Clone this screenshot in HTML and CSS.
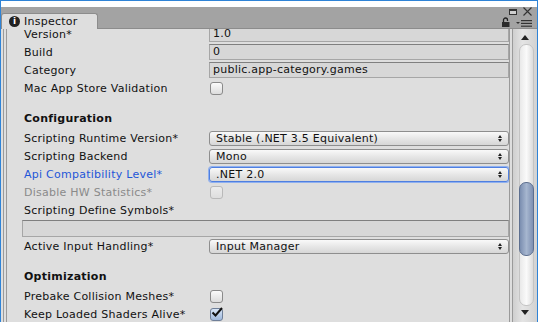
FILE: index.html
```html
<!DOCTYPE html>
<html lang="en">
<head>
    <meta charset="UTF-8">
    <title>Inspector</title>
    <link rel="stylesheet" href="styles.css">
</head>
<body>
    <div class="window">
        <div class="title-strip"></div>
        <div class="tab-bar">
            <div class="tab">
                <span class="info-icon">i</span>
                <span class="tab-title">Inspector</span>
            </div>
            <div class="window-tools">
                <div class="tools-top">
                    <span class="max-icon"></span>
                    <svg class="close-icon" width="9" height="9" viewBox="0 0 9 9"><path d="M0.5 0.5 L8.5 8.5 M8.5 0.5 L0.5 8.5" stroke="#333" stroke-width="1.1"/></svg>
                </div>
                <div class="tools-bottom">
                    <svg class="lock-icon" width="9" height="10" viewBox="0 0 9 10"><path d="M1.5 5 V3 A2 2 0 0 1 5.5 3 V4" fill="none" stroke="#222" stroke-width="1.3"/><rect x="0" y="5" width="7.5" height="5" fill="#2a2a2a"/></svg>
                    <svg class="menu-icon" width="16" height="7" viewBox="0 0 16 7"><path d="M0 2 L4 2 L2 4 Z" fill="#333"/><rect x="5" y="0" width="11" height="1.2" fill="#333"/><rect x="5" y="2.8" width="11" height="1.2" fill="#333"/><rect x="5" y="5.6" width="11" height="1.2" fill="#333"/></svg>
                </div>
            </div>
        </div>
        <div class="panel">
            <div class="gutter"></div>
            <div class="content">
                <div class="rows">
                    <div class="row">
                        <span class="label">Version*</span>
                        <span class="text-field">1.0</span>
                    </div>
                    <div class="row">
                        <span class="label">Build</span>
                        <span class="text-field">0</span>
                    </div>
                    <div class="row">
                        <span class="label">Category</span>
                        <span class="text-field">public.app-category.games</span>
                    </div>
                    <div class="row">
                        <span class="label">Mac App Store Validation</span>
                        <span><span class="checkbox"></span></span>
                    </div>

                    <div class="section-title">Configuration</div>
                    <div class="row">
                        <span class="label">Scripting Runtime Version*</span>
                        <span class="popup">Stable (.NET 3.5 Equivalent)<span class="arrows"></span></span>
                    </div>
                    <div class="row">
                        <span class="label">Scripting Backend</span>
                        <span class="popup">Mono<span class="arrows"></span></span>
                    </div>
                    <div class="row">
                        <span class="label label-active">Api Compatibility Level*</span>
                        <span class="popup popup-focus">.NET 2.0<span class="arrows"></span></span>
                    </div>
                    <div class="row">
                        <span class="label label-disabled">Disable HW Statistics*</span>
                        <span><span class="checkbox checkbox-disabled"></span></span>
                    </div>
                    <div class="row">
                        <span class="label">Scripting Define Symbols*</span>
                    </div>
                    <div class="wide-row">
                        <span class="text-field wide-field"></span>
                    </div>
                    <div class="row">
                        <span class="label">Active Input Handling*</span>
                        <span class="popup">Input Manager<span class="arrows"></span></span>
                    </div>

                    <div class="section-title">Optimization</div>
                    <div class="row">
                        <span class="label">Prebake Collision Meshes*</span>
                        <span><span class="checkbox"></span></span>
                    </div>
                    <div class="row">
                        <span class="label">Keep Loaded Shaders Alive*</span>
                        <span><span class="checkbox checkbox-on">
                            <svg width="12" height="11" viewBox="0 0 12 11"><path d="M1.5 5.5 L4.5 8.5 L11 1" fill="none" stroke="#111" stroke-width="2"/></svg>
                        </span></span>
                    </div>
                </div>
            </div>
            <div class="scrollbar">
                <div class="scroll-up"></div>
                <div class="track">
                    <div class="thumb"></div>
                </div>
                <div class="scroll-down"></div>
            </div>
        </div>
    </div>
</body>
</html>
```

FILE: styles.css
```css
body {
    margin: 0;
    font-family: "DejaVu Sans", Verdana, sans-serif;
    font-size: 11px;
    letter-spacing: 0.25px;
    color: #111;
    background: #ffffff;
}

.window {
    width: 538px;
    height: 322px;
    box-sizing: border-box;
    border: 1px solid #2f83d6;
    border-bottom: none;
    overflow: hidden;
    display: flex;
    flex-direction: column;
}

.title-strip {
    height: 6px;
    background: #ffffff;
}

.tab-bar {
    height: 21px;
    background: #a3a3a3;
    display: flex;
    justify-content: space-between;
    align-items: flex-end;
    border-bottom: 1px solid #8c8c8c;
}

.tab {
    width: 88px;
    height: 15px;
    margin-bottom: -1px;
    background: #dedede;
    border: 1px solid #8c8c8c;
    border-bottom: none;
    border-radius: 3px 3px 0 0;
    display: flex;
    align-items: center;
    gap: 4px;
    padding-left: 7px;
    box-sizing: content-box;
}

.info-icon {
    width: 11px;
    height: 11px;
    border-radius: 50%;
    background: #222;
    color: #fff;
    font-weight: bold;
    font-size: 9px;
    letter-spacing: 0;
    line-height: 11px;
    text-align: center;
}

.tab-title {
    color: #111;
}

.window-tools {
    display: flex;
    flex-direction: column;
    align-items: flex-end;
    padding-right: 5px;
    gap: 1px;
    padding-bottom: 1px;
}

.tools-top {
    display: flex;
    align-items: center;
    gap: 6px;
}

.max-icon {
    width: 6px;
    height: 3px;
    border: 1px solid #333;
    border-top-width: 2px;
    background: #cfcfcf;
}

.tools-bottom {
    display: flex;
    align-items: flex-end;
    gap: 5px;
}

.panel {
    flex: 1;
    display: flex;
    background: #dedede;
    min-height: 0;
}

.gutter {
    width: 2px;
    margin-left: 2px;
    border-left: 1px solid #9a9a9a;
    border-right: 1px solid #9a9a9a;
}

.content {
    flex: 1;
    overflow: hidden;
    border-right: 1px solid #9a9a9a;
}

.rows {
    margin-top: -3px;
    padding-left: 17px;
}

.row {
    height: 16px;
    margin-bottom: 2px;
    display: grid;
    grid-template-columns: 185px 1fr;
    align-items: center;
}

.label {
    white-space: nowrap;
}

.label-active {
    color: #1f56d8;
}

.label-disabled {
    color: #8a8a8a;
}

.section-title {
    height: 16px;
    line-height: 16px;
    margin-top: 15px;
    margin-bottom: 3px;
    font-weight: bold;
}

.text-field {
    height: 16px;
    box-sizing: border-box;
    background: #d7d7d7;
    border: 1px solid #a6a6a6;
    border-top-color: #7f7f7f;
    padding-left: 3px;
    line-height: 14px;
}

.wide-row {
    height: 17px;
    margin-bottom: 1px;
    margin-left: -2px;
}

.wide-field {
    display: block;
    height: 17px;
}

.checkbox {
    display: block;
    width: 13px;
    height: 13px;
    box-sizing: border-box;
    margin-left: 1px;
    border: 1px solid #8a8a8a;
    border-radius: 3px;
    background: linear-gradient(#fbfbfb, #dcdcdc);
}

.checkbox-disabled {
    border-color: #b9b9b9;
    background: linear-gradient(#ececec, #dedede);
}

.checkbox-on {
    position: relative;
    background: linear-gradient(#d8e6f7, #9fb8dc);
    border-color: #6f7f98;
}

.checkbox-on svg {
    position: absolute;
    left: 0;
    top: -2px;
}

.popup {
    position: relative;
    height: 15px;
    box-sizing: border-box;
    border: 1px solid #8e8e8e;
    border-radius: 3px;
    background: linear-gradient(#f9f9f9, #e3e3e3 60%, #d6d6d6);
    padding-left: 6px;
    line-height: 13px;
}

.popup-focus {
    border-color: #4f7fe0;
    box-shadow: 0 0 0 1px #8fb0ef;
}

.arrows {
    position: absolute;
    right: 6px;
    top: 3px;
    width: 0;
    height: 0;
    border-left: 2px solid transparent;
    border-right: 2px solid transparent;
    border-bottom: 3px solid #222;
}

.arrows::after {
    content: "";
    position: absolute;
    left: -2px;
    top: 4px;
    border-left: 2px solid transparent;
    border-right: 2px solid transparent;
    border-top: 3px solid #222;
}

.scrollbar {
    width: 24px;
    margin-left: 2px;
    border-left: 1px solid #9a9a9a;
    background: linear-gradient(90deg, #cfcfcf, #e4e4e4 40%, #d2d2d2);
    display: flex;
    flex-direction: column;
    align-items: center;
}

.scroll-up {
    margin-top: 6px;
    border-left: 4px solid transparent;
    border-right: 4px solid transparent;
    border-bottom: 5px solid #222;
}

.track {
    flex: 1;
    width: 13px;
    margin: 4px 0 4px 2px;
    border-radius: 7px;
    background: linear-gradient(90deg, #e9e9e9, #fafafa 50%, #dcdcdc);
    border: 1px solid #c4c4c4;
    position: relative;
}

.thumb {
    position: absolute;
    left: -1px;
    right: -1px;
    top: 137px;
    height: 72px;
    border-radius: 7px;
    border: 1px solid #5d6f8f;
    background: linear-gradient(90deg, #7b8eb0, #a6b6cf 50%, #7e90b2);
}

.scroll-down {
    margin-bottom: 7px;
    border-left: 4px solid transparent;
    border-right: 4px solid transparent;
    border-top: 5px solid #222;
}
```
